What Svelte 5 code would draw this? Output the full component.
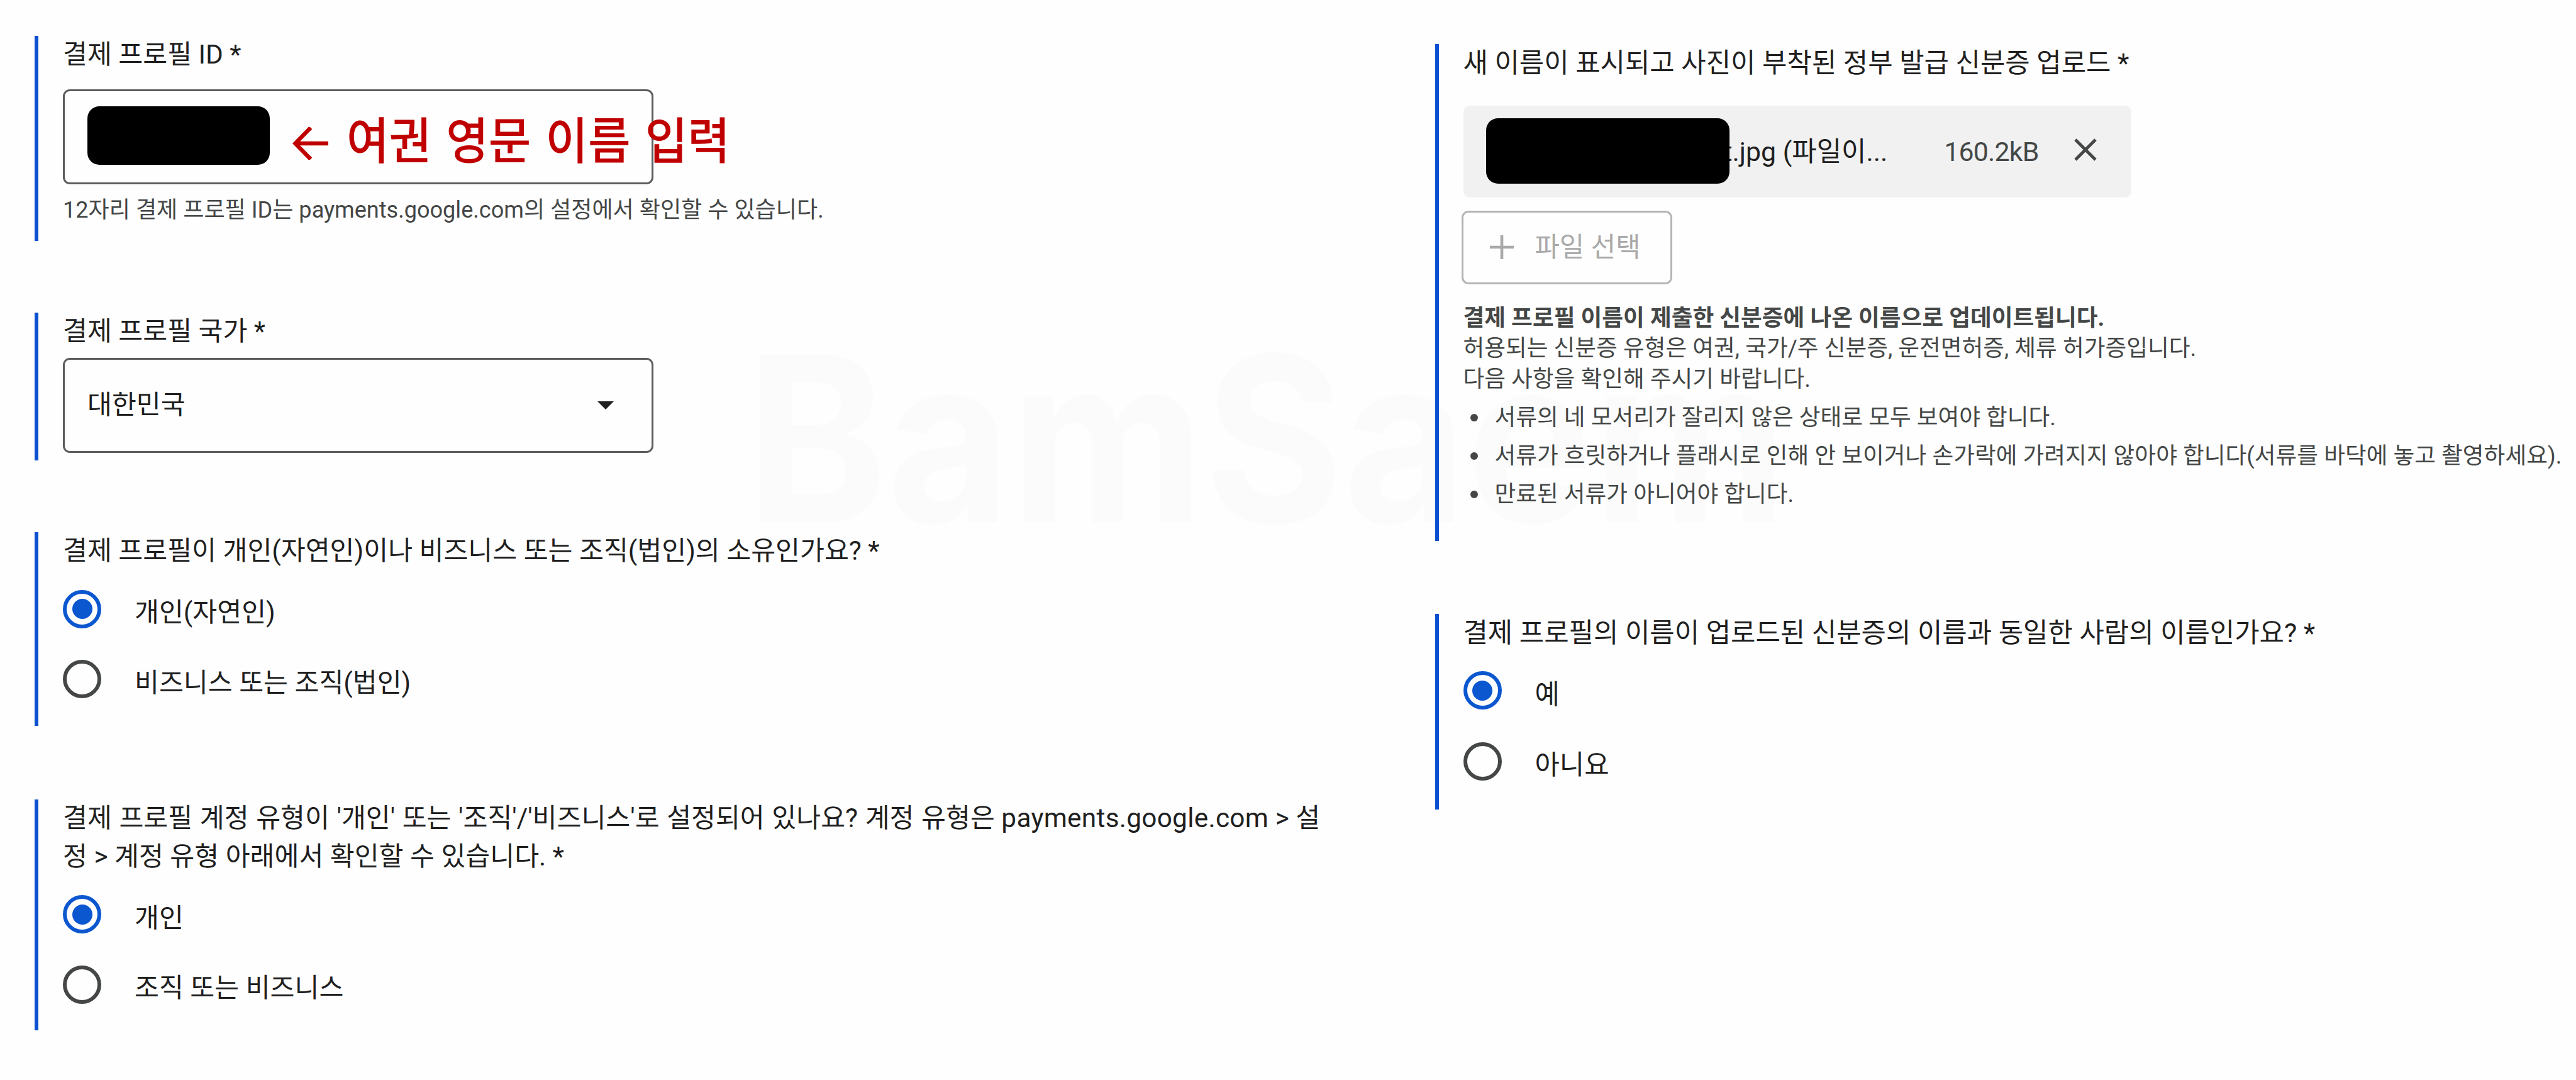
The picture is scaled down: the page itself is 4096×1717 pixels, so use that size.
<script lang="ts">
    let owner = $state("person");
    let account = $state("person");
    let same = $state("yes");

    const ownerOptions = [
        { value: "person", text: "개인(자연인)" },
        { value: "business", text: "비즈니스 또는 조직(법인)" },
    ];
    const accountOptions = [
        { value: "person", text: "개인" },
        { value: "business", text: "조직 또는 비즈니스" },
    ];
    const sameOptions = [
        { value: "yes", text: "예" },
        { value: "no", text: "아니요" },
    ];
    const rules = [
        "서류의 네 모서리가 잘리지 않은 상태로 모두 보여야 합니다.",
        "서류가 흐릿하거나 플래시로 인해 안 보이거나 손가락에 가려지지 않아야 합니다(서류를 바닥에 놓고 촬영하세요).",
        "만료된 서류가 아니어야 합니다.",
    ];
</script>

{#snippet radios(name: string, options: { value: string; text: string }[], current: string, pick: (v: string) => void)}
    <div class="radios" role="radiogroup" aria-label={name}>
        {#each options as option (option.value)}
            <button
                class="radio"
                role="radio"
                aria-checked={option.value === current}
                onclick={() => pick(option.value)}
            >
                <span class="ring" class:checked={option.value === current}></span>
                <span class="radio-text">{option.text}</span>
            </button>
        {/each}
    </div>
{/snippet}

<main>
    <div class="watermark">BamSaem</div>

    <div class="column left">
        <section class="question profile-id">
            <p class="label">결제 프로필 ID *</p>
            <div class="field">
                <span class="redacted"></span>
                <!-- the note runs past the right edge of the field -->
                <span class="note">
                    <svg viewBox="0 0 57 52" width="57" height="52">
                        <path d="M57 26H5M29 1L4.500 26 29 51" fill="none" stroke="currentColor" stroke-width="6.5" />
                    </svg>
                    <span class="note-text">여권 영문 이름 입력</span>
                </span>
            </div>
            <p class="hint">12자리 결제 프로필 ID는 payments.google.com의 설정에서 확인할 수 있습니다.</p>
        </section>

        <section class="question country">
            <p class="label">결제 프로필 국가 *</p>
            <div class="field">
                <span>대한민국</span>
                <svg class="caret" viewBox="0 0 26 13" width="26" height="13">
                    <path d="M0 0h26L13 13z" fill="currentColor" />
                </svg>
            </div>
        </section>

        <section class="question owner">
            <p class="label">결제 프로필이 개인(자연인)이나 비즈니스 또는 조직(법인)의 소유인가요? *</p>
            {@render radios("owner", ownerOptions, owner, (v) => (owner = v))}
        </section>

        <section class="question account">
            <p class="label">
                <span class="wide">결제 프로필 계정 유형이 '개인' 또는 '조직'/'비즈니스'로 설정되어 있나요? 계정 유형은</span> <span class="url">payments.google.com</span> &gt; 설<br />정 &gt; 계정 유형 아래에서 확인할 수 있습니다. *
            </p>
            {@render radios("account", accountOptions, account, (v) => (account = v))}
        </section>
    </div>

    <div class="column right">
        <section class="question upload">
            <p class="label">새 이름이 표시되고 사진이 부착된 정부 발급 신분증 업로드 *</p>
            <div class="file">
                <span class="redacted"></span>
                <span class="file-name">t.jpg (파일이...</span>
                <span class="file-size">160.2kB</span>
                <svg class="close" viewBox="0 0 36 36" width="36" height="36">
                    <path d="M2 2l32 32M34 2L2 34" fill="none" stroke="currentColor" stroke-width="4.8" />
                </svg>
            </div>
            <button class="pick" disabled>
                <svg viewBox="0 0 38 38" width="38" height="38">
                    <path d="M19 0v38M0 19h38" fill="none" stroke="currentColor" stroke-width="4.6" />
                </svg>
                파일 선택
            </button>
            <div class="info">
                <p><strong>결제 프로필 이름이 제출한 신분증에 나온 이름으로 업데이트됩니다.</strong></p>
                <p>허용되는 신분증 유형은 여권, 국가/주 신분증, 운전면허증, 체류 허가증입니다.</p>
                <p>다음 사항을 확인해 주시기 바랍니다.</p>
                <ul>
                    {#each rules as rule}
                        <li>{rule}</li>
                    {/each}
                </ul>
            </div>
        </section>

        <section class="question same">
            <p class="label">결제 프로필의 이름이 업로드된 신분증의 이름과 동일한 사람의 이름인가요? *</p>
            {@render radios("same", sameOptions, same, (v) => (same = v))}
        </section>
    </div>
</main>

<style>
    :global(body) {
        margin: 0;
        background: #fefefe;
    }

    main {
        position: relative;
        display: grid;
        grid-template-columns: 2226.5px 1fr;
        box-sizing: border-box;
        width: 4096px;
        height: 1717px;
        padding-left: 55px;
        overflow: hidden;
        background: #fefefe;
        color: #1f1f1f;
        font-family: Roboto, "Noto Sans CJK KR", sans-serif;
        white-space: nowrap;
    }

    p,
    ul {
        margin: 0;
        padding: 0;
    }

    button {
        margin: 0;
        padding: 0;
        border: none;
        background: none;
        color: inherit;
        font: inherit;
        text-align: left;
    }

    .watermark {
        position: absolute;
        left: 1187px;
        top: 537px;
        color: #fbfbfb;
        font-family: Inter, sans-serif;
        font-size: 366px;
        font-weight: 700;
        line-height: 320px;
        transform: scaleX(0.923);
        transform-origin: left;
    }

    .column {
        position: relative;
        display: flex;
        flex-direction: column;
    }

    .left {
        padding-top: 57px;
        font-size: 42.3px;
    }

    .right {
        padding-top: 70px;
        font-size: 42.8px;
    }

    .question {
        box-sizing: border-box;
        padding-left: 39px;
        border-left: 6px solid #0b50d0;
    }

    .profile-id {
        height: 326px;
        margin-bottom: 114px;
    }

    .country {
        height: 235px;
        margin-bottom: 114px;
    }

    .owner {
        height: 308px;
        margin-bottom: 117px;
    }

    .account {
        height: 367px;
    }

    .upload {
        height: 790px;
        margin-bottom: 116px;
    }

    .same {
        height: 311px;
    }

    .label {
        padding-bottom: 1px;
        line-height: 60.5px;
    }

    .wide {
        word-spacing: 1.1px;
    }

    .url {
        letter-spacing: 0.3px;
    }

    .field {
        display: flex;
        align-items: center;
        box-sizing: border-box;
        width: 939px;
        height: 151px;
        margin-top: 10px;
        padding: 0 60px 0 36px;
        border: 3px solid #5b5d5c;
        border-radius: 11px;
        line-height: 60px;
    }

    .profile-id .field {
        margin-top: 23px;
    }

    .caret {
        margin-left: auto;
    }

    .redacted {
        flex: none;
        width: 290px;
        height: 93px;
        border-radius: 19px;
        background: #000;
    }

    .profile-id .redacted {
        margin-top: -4px;
    }

    .note {
        display: flex;
        align-items: center;
        gap: 29px;
        margin-left: 36px;
        padding-top: 4px;
        color: #c00000;
        font-family: "Noto Sans CJK KR", sans-serif;
        font-size: 79px;
        font-weight: 500;
        line-height: 100px;
    }

    .note svg {
        margin-top: 18px;
    }

    .note-text {
        word-spacing: 7px;
        transform: scaleX(0.93);
        transform-origin: left;
    }

    .hint {
        margin-top: 16px;
        color: #444746;
        font-size: 36.1px;
        line-height: 50px;
    }

    .radios {
        padding-top: 5px;
    }

    .radio {
        display: flex;
        align-items: center;
        gap: 53px;
        height: 111.5px;
        line-height: 60px;
    }

    .same .radio {
        height: 112.5px;
    }

    .same .radios {
        padding-top: 4px;
    }

    .ring {
        position: relative;
        box-sizing: border-box;
        width: 61px;
        height: 61px;
        border: 6px solid #444746;
        border-radius: 50%;
    }

    .ring.checked {
        border-color: #0b57d0;
    }

    .ring.checked::after {
        content: "";
        position: absolute;
        inset: 8.5px;
        border-radius: 50%;
        background: #0b57d0;
    }

    .radio-text {
        padding-top: 12px;
    }

    .file {
        display: flex;
        align-items: center;
        box-sizing: border-box;
        width: 1062px;
        height: 146px;
        margin-top: 36px;
        padding: 0 55px 0 36px;
        border-radius: 10px;
        background: #f1f1f1;
        line-height: 60px;
    }

    .file .redacted {
        position: relative;
        z-index: 1;
        width: 387px;
        height: 104px;
        margin-top: -2px;
    }

    .file-name {
        margin-left: -9px;
    }

    .file-size {
        margin-left: auto;
        color: #444746;
        letter-spacing: -0.8px;
    }

    .close {
        margin: -6px 0 0 56px;
        color: #444746;
    }

    .pick {
        display: flex;
        align-items: center;
        box-sizing: border-box;
        width: 335px;
        height: 117px;
        margin: 21px 0 0 -3px;
        padding-left: 42px;
        gap: 34px;
        border: 3px solid #b4b4b4;
        border-radius: 11px;
        color: #a9a9a9;
        line-height: 60px;
    }

    .info {
        margin-top: 30px;
        color: #444746;
        font-size: 36.7px;
        line-height: 48.6px;
    }

    ul {
        padding-top: 6px;
        list-style: none;
    }

    li {
        display: flex;
        align-items: center;
        gap: 27px;
        padding-left: 11px;
        line-height: 61px;
    }

    li::before {
        content: "";
        width: 12px;
        height: 12px;
        border-radius: 50%;
        background: #444746;
    }
</style>
